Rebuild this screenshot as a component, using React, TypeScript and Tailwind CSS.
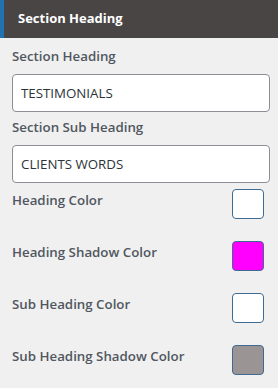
import React from "react";

type ColorRow = {
  label: string;
  color: string;
};

const colorRows: ColorRow[] = [
  { label: "Heading Color", color: "#ffffff" },
  { label: "Heading Shadow Color", color: "#ff00ff" },
  { label: "Sub Heading Color", color: "#ffffff" },
  { label: "Sub Heading Shadow Color", color: "#9a9494" },
];

function TextField({ label, value, first }: { label: string; value: string; first?: boolean }) {
  return (
    <div className={first ? "" : "mt-[6px]"}>
      <label className="block text-[13.3px] leading-[18px] font-semibold text-[#50575e]">
        {label}
      </label>
      <input
        type="text"
        defaultValue={value}
        className="mt-[9px] block h-[38px] w-full rounded-[4px] border border-[#8c8f94] bg-white px-2 text-[13.3px] text-[#2c3338] outline-none"
      />
    </div>
  );
}

export default function App() {
  return (
    <div
      className="h-[388px] w-[278px] overflow-hidden bg-[#f0f0f1]"
      style={{ fontFamily: '"Open Sans", "Liberation Sans", sans-serif' }}
    >
      {/* section title bar */}
      <div className="flex h-[38px] items-center border-l-4 border-[#2271b1] bg-[#4a4545] pl-[14px]">
        <span className="text-[13px] font-bold text-white">Section Heading</span>
      </div>

      <div className="pl-3 pr-2 pt-[9px]">
        <TextField label="Section Heading" value="TESTIMONIALS" first />
        <TextField label="Section Sub Heading" value="CLIENTS WORDS" />

        <div className="mt-[6px] flex flex-col gap-[22px] pr-[6px]">
          {colorRows.map((row) => (
            <div key={row.label} className="flex items-start justify-between">
              <span className="pt-[2px] text-[13.3px] leading-[18px] font-semibold text-[#50575e]">
                {row.label}
              </span>
              <button
                type="button"
                className="h-[30px] w-[32px] rounded-[4px] border border-[#3f6a92]"
                style={{ backgroundColor: row.color }}
                aria-label={row.label}
              />
            </div>
          ))}
        </div>
      </div>
    </div>
  );
}
